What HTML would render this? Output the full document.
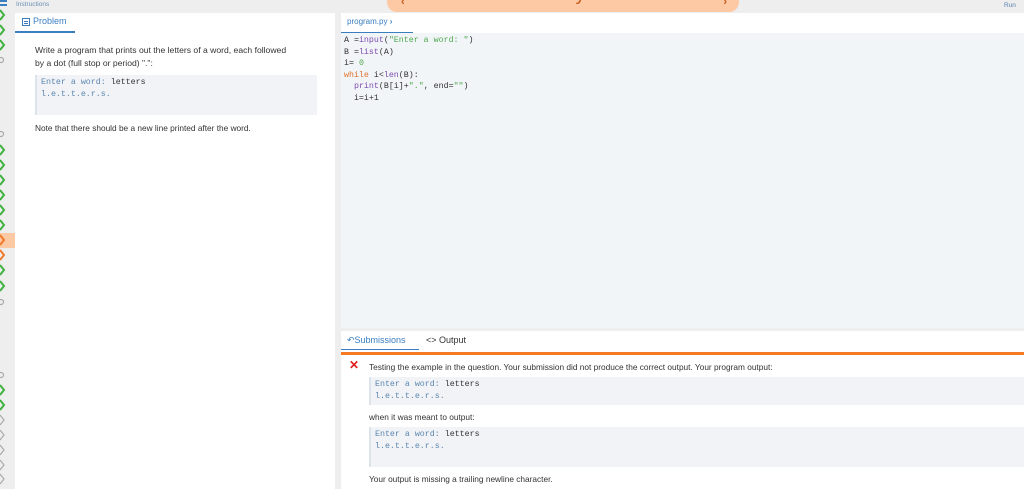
<!DOCTYPE html>
<html><head><meta charset="utf-8"><style>
*{margin:0;padding:0;box-sizing:border-box}
body{width:1024px;height:489px;overflow:hidden;background:#eeeeee;font-family:"Liberation Sans",sans-serif;position:relative;color:#333}
.abs{position:absolute}
.mono{font-family:"Liberation Mono",monospace;font-size:8.3px;line-height:11.5px}
.pre{background:#f1f3f6;border-left:2px solid #dde3ea;position:absolute}
.k{color:#5b86b0}
</style></head><body>
<div class="abs" style="left:0;top:0;width:7px;height:2px;background:#3a7ec0"></div>
<div class="abs" style="left:0;top:4px;width:7px;height:2px;background:#3a7ec0"></div>
<div class="abs" style="left:16px;top:1px;font-size:6.5px;color:#6a8fb5">Instructions</div>
<div class="abs" style="left:387px;top:-10px;width:352px;height:22px;background:#fdc8a4;border-radius:10px;overflow:hidden">
<div style="position:absolute;left:0;right:0;top:-6px;text-align:center;font-size:19px;color:#c65a1e">Dotty</div>
<div style="position:absolute;left:14px;top:6px;color:#c65a1e;font-size:11px;font-weight:bold">‹</div>
<div style="position:absolute;right:12px;top:6px;color:#c65a1e;font-size:11px;font-weight:bold">›</div>
</div>
<div class="abs" style="left:1004px;top:2px;font-size:6.5px;color:#5a80b0">Run</div>
<div class="abs" style="left:0;top:233px;width:15px;height:15px;background:#fcc9a5"></div>
<svg class="abs" style="left:0;top:0" width="15" height="489">
<g fill="none" stroke-width="2">
<g stroke="#3fb23f"><polyline points="0,10 4,15 0,20"/><polyline points="0,25 4,30 0,35"/><polyline points="0,40 4,45 0,50"/>
<polyline points="0,145 4,150 0,155"/><polyline points="0,160 4,165 0,170"/><polyline points="0,175 4,180 0,185"/><polyline points="0,190 4,195 0,200"/><polyline points="0,205 4,210 0,215"/><polyline points="0,220 4,225 0,230"/>
<polyline points="0,265 4,270 0,275"/><polyline points="0,281 4,286 0,291"/>
<polyline points="0,385 4,390 0,395"/><polyline points="0,400 4,405 0,410"/></g>
<g stroke="#f07a2a"><polyline points="0,235 4,240 0,245"/><polyline points="0,250 4,255 0,260"/></g>
<g stroke="#aaa" stroke-width="1.2"><polyline points="0,415 4,420 0,425"/><polyline points="0,430 4,435 0,440"/><polyline points="0,445 4,450 0,455"/><polyline points="0,460 4,465 0,470"/><polyline points="0,474 4,479 0,484"/>
<circle cx="1" cy="60" r="2.5"/><circle cx="1" cy="134" r="2.5"/><circle cx="1" cy="302" r="2.5"/><circle cx="1" cy="375" r="2.5"/></g>
</g></svg>
<div class="abs" style="left:15px;top:13px;width:320px;height:476px;background:#fff">
<div class="abs" style="left:0;top:0;width:60px;height:20px;border-bottom:2px solid #3a7ec0"></div>
<div class="abs" style="left:7px;top:5px;width:8px;height:8px;border:1.2px solid #3a7ec0"></div>
<div class="abs" style="left:9px;top:8px;width:4px;height:1px;background:#3a7ec0"></div>
<div class="abs" style="left:9px;top:10px;width:4px;height:1px;background:#3a7ec0"></div>
<div class="abs" style="left:18px;top:3px;font-size:9px;color:#3a7ec0">Problem</div>
<div class="abs" style="left:20px;top:31px;font-size:8.6px;line-height:13px;color:#333;width:295px;white-space:nowrap">Write a program that prints out the letters of a word, each followed<br>by a dot (full stop or period) ".":</div>
<div class="pre mono" style="left:20px;top:62px;width:282px;height:40px;padding:2px 4px"><span class="k">Enter a word:</span> letters<br><span class="k">l.e.t.t.e.r.s.</span></div>
<div class="abs" style="left:20px;top:110px;font-size:8.3px;color:#333">Note that there should be a new line printed after the word.</div>
</div>
<div class="abs" style="left:341px;top:13px;width:683px;height:20px;background:#fff"></div>
<div class="abs" style="left:341px;top:13px;width:72px;height:20px;border-bottom:1.5px solid #3a7ec0"></div>
<div class="abs" style="left:347px;top:17px;font-size:8px;color:#3a7ec0">program.py <b style="font-size:8px">›</b></div>
<div class="abs mono" style="left:341px;top:33px;width:683px;height:295px;background:#f2f5f8;padding:2px 3px;color:#333">
A =<span style="color:#7c4db0">input</span>(<span style="color:#4fa84f">"Enter a word: "</span>)<br>
B =<span style="color:#7c4db0">list</span>(A)<br>
i= <span style="color:#4fa84f">0</span><br>
<span style="color:#e0702a">while</span> i&lt;<span style="color:#7c4db0">len</span>(B):<br>
&nbsp; <span style="color:#7c4db0">print</span>(B[i]+<span style="color:#4fa84f">"."</span>, end=<span style="color:#4fa84f">""</span>)<br>
&nbsp; i=i+1</div>
<div class="abs" style="left:341px;top:331px;width:683px;height:158px;background:#fff"></div>
<div class="abs" style="left:341px;top:331px;width:78px;height:19px;border-bottom:1.5px solid #3a7ec0"></div>
<div class="abs" style="left:347px;top:335px;font-size:9px;color:#3a7ec0">↶Submissions</div>
<div class="abs" style="left:426px;top:335px;font-size:9px;color:#333">&lt;&gt; Output</div>
<div class="abs" style="left:341px;top:352px;width:683px;height:3px;background:#f47b24"></div>
<div class="abs" style="left:349px;top:358px;font-size:12px;font-weight:bold;color:#e02020">✕</div>
<div class="abs" style="left:369px;top:362px;font-size:8.3px;color:#333">Testing the example in the question. Your submission did not produce the correct output. Your program output:</div>
<div class="pre mono" style="left:369px;top:377px;width:655px;height:28px;padding:2px 4px"><span class="k">Enter a word:</span> letters<br><span class="k">l.e.t.t.e.r.s.</span></div>
<div class="abs" style="left:369px;top:412px;font-size:8.3px;color:#333">when it was meant to output:</div>
<div class="pre mono" style="left:369px;top:427px;width:655px;height:40px;padding:2px 4px"><span class="k">Enter a word:</span> letters<br><span class="k">l.e.t.t.e.r.s.</span></div>
<div class="abs" style="left:369px;top:474px;font-size:8.3px;color:#333">Your output is missing a trailing newline character.</div>
</body></html>
